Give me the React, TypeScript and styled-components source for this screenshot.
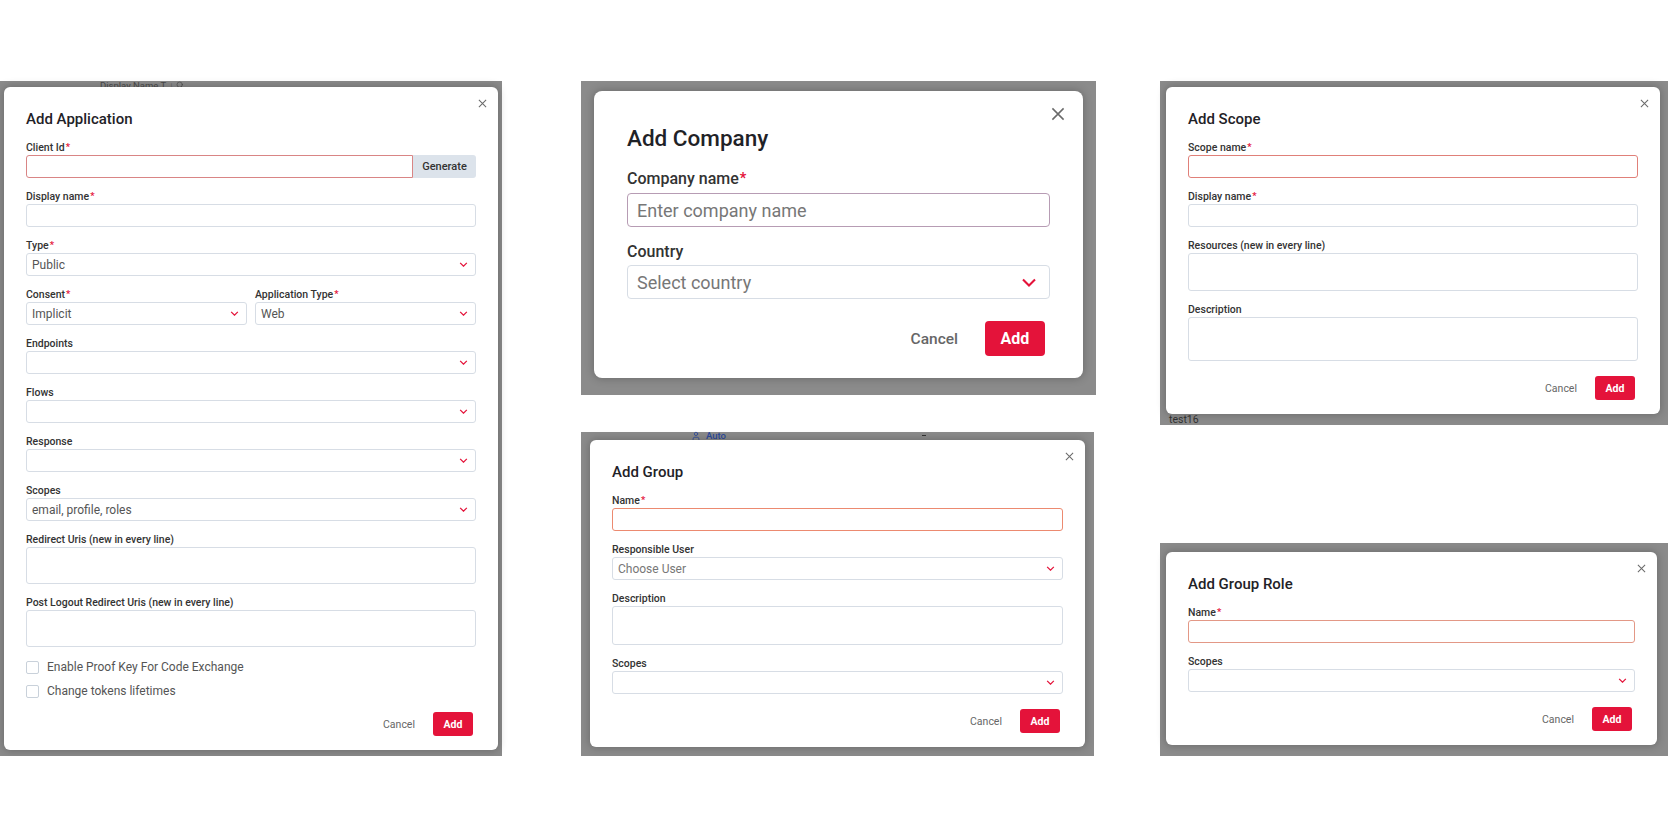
import { createContext, useContext, ReactNode } from "react";
import styled, { createGlobalStyle } from "styled-components";
import { User, Search } from "lucide-react";

const RED = "#e4133a";
const LINE = "#d7dde5";

const GlobalStyle = createGlobalStyle`
  html, body {
    margin: 0;
    padding: 0;
    background: #fff;
    overflow: hidden;
  }
  body {
    font-family: Roboto, "Liberation Sans", Arial, sans-serif;
  }
  * {
    box-sizing: border-box;
  }
`;

// true for the bigger "Add Company" capture
const SizeContext = createContext(false);

const XIcon = ({ size }: { size: number }) => (
  <svg width={size} height={size} viewBox="0 0 10 10">
    <path d="M1 1L9 9M9 1L1 9" stroke="#6a6a6a" strokeWidth={size > 10 ? 1.1 : 1.15} fill="none" />
  </svg>
);

const Chevron = ({ lg }: { lg: boolean }) => (
  <svg width={lg ? 16 : 9} height={lg ? 9 : 5} viewBox="0 0 10 6">
    <path d="M1 1L5 5L9 1" stroke={RED} strokeWidth={lg ? 1.4 : 1.5} fill="none" />
  </svg>
);

export default function App() {
  return (
    <>
      <GlobalStyle />
      <Page>
        <Column>
          <Backdrop $w={502} $pad="0 4px 6px">
            <Strip $h={6} $left={96}>
              <PeekText>
                Display Name T<small>↓</small> <Search size={8} strokeWidth={2} />
              </PeekText>
            </Strip>
            <Modal title="Add Application">
              <Field label="Client Id" required>
                <InputGroup>
                  <Input $border="#d98585" />
                  <GenerateButton>Generate</GenerateButton>
                </InputGroup>
              </Field>
              <Field label="Display name" required>
                <Input />
              </Field>
              <Field label="Type" required>
                <Select value="Public" />
              </Field>
              <Pair>
                <Field label="Consent" required>
                  <Select value="Implicit" />
                </Field>
                <Field label="Application Type" required>
                  <Select value="Web" />
                </Field>
              </Pair>
              <Field label="Endpoints">
                <Select />
              </Field>
              <Field label="Flows">
                <Select />
              </Field>
              <Field label="Response">
                <Select />
              </Field>
              <Field label="Scopes">
                <Select value="email, profile, roles" />
              </Field>
              <Field label="Redirect Uris (new in every line)">
                <TextArea $h={37} />
              </Field>
              <Field label="Post Logout Redirect Uris (new in every line)">
                <TextArea $h={37} />
              </Field>
              <CheckList>
                <CheckRow>
                  <Box />
                  Enable Proof Key For Code Exchange
                </CheckRow>
                <CheckRow>
                  <Box />
                  Change tokens lifetimes
                </CheckRow>
              </CheckList>
            </Modal>
          </Backdrop>
        </Column>

        <Column $gap={79}>
          <Backdrop $w={515} $pad="10px 13px 17px">
            <Modal title="Add Company" lg>
              <Field label="Company name" required>
                <Input $border="#b79cb4" placeholder="Enter company name" />
              </Field>
              <Field label="Country">
                <Select placeholder="Select country" />
              </Field>
            </Modal>
          </Backdrop>
          <Backdrop $w={513} $pad="0 9px 9px">
            <Strip $h={8} $left={101}>
              <AutoTag>
                <User size={10} strokeWidth={2} />
                Auto
              </AutoTag>
              <Dash />
            </Strip>
            <Modal title="Add Group">
              <Field label="Name" required>
                <Input $border="#ec8a70" />
              </Field>
              <Field label="Responsible User">
                <Select placeholder="Choose User" />
              </Field>
              <Field label="Description">
                <TextArea $h={39} />
              </Field>
              <Field label="Scopes">
                <Select />
              </Field>
            </Modal>
          </Backdrop>
        </Column>

        <Column $gap={64}>
          <Backdrop $w={508} $pad="6px 8px 0 6px">
            <Modal title="Add Scope">
              <Field label="Scope name" required>
                <Input $border="#e08079" />
              </Field>
              <Field label="Display name" required>
                <Input />
              </Field>
              <Field label="Resources (new in every line)">
                <TextArea $h={38} />
              </Field>
              <Field label="Description">
                <TextArea $h={44} />
              </Field>
            </Modal>
            <Strip $h={11} $left={3}>
              <BehindText>test16</BehindText>
            </Strip>
          </Backdrop>
          <Backdrop $w={508} $pad="9px 11px 11px 6px">
            <Modal title="Add Group Role">
              <Field label="Name" required>
                <Input $border="#e39886" />
              </Field>
              <Field label="Scopes">
                <Select />
              </Field>
            </Modal>
          </Backdrop>
        </Column>
      </Page>
    </>
  );
}

const Modal = ({ title, lg = false, children }: { title: string; lg?: boolean; children: ReactNode }) => (
  <SizeContext.Provider value={lg}>
    <Sheet $lg={lg}>
      <Close $lg={lg} aria-label="Close">
        <XIcon size={lg ? 14 : 9} />
      </Close>
      <Title $lg={lg}>{title}</Title>
      {children}
      <Footer $lg={lg}>
        <CancelButton $lg={lg}>Cancel</CancelButton>
        <AddButton $lg={lg}>Add</AddButton>
      </Footer>
    </Sheet>
  </SizeContext.Provider>
);

const Field = ({ label, required, children }: { label: string; required?: boolean; children: ReactNode }) => {
  const lg = useContext(SizeContext);
  return (
    <FieldWrap $lg={lg}>
      <Label $lg={lg}>
        {label}
        {required && <Req>*</Req>}
      </Label>
      {children}
    </FieldWrap>
  );
};

const Select = ({ value, placeholder }: { value?: string; placeholder?: string }) => {
  const lg = useContext(SizeContext);
  return (
    <SelectBox $lg={lg}>
      <SelectText $lg={lg} $muted={!value}>
        {value ?? placeholder}
      </SelectText>
      <Chevron lg={lg} />
    </SelectBox>
  );
};

const Input = (props: { $border?: string; placeholder?: string }) => {
  const lg = useContext(SizeContext);
  return <InputField $lg={lg} {...props} />;
};

const Page = styled.div`
  display: flex;
  align-items: flex-start;
  padding-top: 81px;
  width: 1668px;
`;

const Column = styled.div<{ $gap?: number }>`
  display: flex;
  flex-direction: column;
  justify-content: space-between;
  height: 675px;
  margin-left: ${(p) => p.$gap ?? 0}px;
`;

const Backdrop = styled.div<{ $w: number; $pad: string }>`
  width: ${(p) => p.$w}px;
  flex-shrink: 0;
  padding: ${(p) => p.$pad};
  background: #8b8b8b;
`;

const Strip = styled.div<{ $h: number; $left: number }>`
  display: flex;
  align-items: flex-start;
  height: ${(p) => p.$h}px;
  padding-left: ${(p) => p.$left}px;
`;

const PeekText = styled.div`
  display: flex;
  align-items: center;
  gap: 3px;
  font-size: 9.5px;
  line-height: 7px;
  color: #4a4a4a;

  small {
    font-size: 8px;
  }
`;

const AutoTag = styled.div`
  display: flex;
  align-items: center;
  gap: 5px;
  margin-top: -1px;
  font-size: 9.5px;
  line-height: 8px;
  font-weight: 500;
  color: #2c4a9c;
`;

const Dash = styled.span`
  width: 4px;
  height: 1px;
  margin: 3px 0 0 196px;
  background: #333;
`;

const BehindText = styled.div`
  font-size: 10.5px;
  line-height: 11px;
  color: #333;
`;

const Sheet = styled.div<{ $lg: boolean }>`
  position: relative;
  background: #fff;
  border-radius: ${(p) => (p.$lg ? 8 : 6)}px;
  box-shadow: 0 0 9px 1px rgba(0, 0, 0, 0.22);
  padding: ${(p) => (p.$lg ? "33px 33px 22px" : "22px 22px 14px")};
`;

const Close = styled.button<{ $lg: boolean }>`
  position: absolute;
  top: ${(p) => (p.$lg ? 16 : 12)}px;
  right: ${(p) => (p.$lg ? 18 : 11)}px;
  display: flex;
  padding: 0;
  border: 0;
  background: none;
`;

const Title = styled.h2<{ $lg: boolean }>`
  margin: 0 0 ${(p) => (p.$lg ? 17 : 12)}px;
  font-size: ${(p) => (p.$lg ? 22.5 : 15)}px;
  line-height: ${(p) => (p.$lg ? 28 : 20)}px;
  font-weight: 500;
  color: #1f2227;
`;

const FieldWrap = styled.div<{ $lg: boolean }>`
  margin-bottom: ${(p) => (p.$lg ? 15 : 12)}px;
`;

const Label = styled.label<{ $lg: boolean }>`
  display: block;
  margin-bottom: ${(p) => (p.$lg ? 3 : 1)}px;
  font-size: ${(p) => (p.$lg ? 16 : 10.5)}px;
  line-height: ${(p) => (p.$lg ? 20 : 13)}px;
  font-weight: 500;
  color: #333;
`;

const Req = styled.span`
  position: relative;
  top: -1px;
  margin-left: 1px;
  color: ${RED};
  font-size: 0.9em;
  font-weight: 700;
`;

const InputField = styled.input<{ $lg: boolean; $border?: string }>`
  display: block;
  width: 100%;
  min-width: 0;
  height: ${(p) => (p.$lg ? 34 : 23)}px;
  padding: 0 ${(p) => (p.$lg ? 9 : 5)}px;
  border: 1px solid ${(p) => p.$border ?? LINE};
  border-radius: ${(p) => (p.$lg ? 4 : 3)}px;
  background: #fff;
  font-family: inherit;
  font-size: ${(p) => (p.$lg ? 18 : 12)}px;
  color: #555;
  outline: none;

  &::placeholder {
    color: #777;
  }
`;

const InputGroup = styled.div`
  display: flex;

  input {
    flex: 1;
    border-radius: 3px 0 0 3px;
  }
`;

const GenerateButton = styled.button`
  width: 63px;
  height: 23px;
  flex-shrink: 0;
  border: 0;
  border-radius: 0 3px 3px 0;
  background: #dce3eb;
  font-family: inherit;
  font-size: 11px;
  font-weight: 500;
  color: #333;
`;

const Pair = styled.div`
  display: grid;
  grid-template-columns: 1fr 1fr;
  column-gap: 8px;
`;

const SelectBox = styled.div<{ $lg: boolean }>`
  display: flex;
  align-items: center;
  justify-content: space-between;
  height: ${(p) => (p.$lg ? 34 : 23)}px;
  padding: 0 ${(p) => (p.$lg ? 12 : 7)}px 0 ${(p) => (p.$lg ? 9 : 5)}px;
  border: 1px solid ${LINE};
  border-radius: ${(p) => (p.$lg ? 4 : 3)}px;
  background: #fff;
`;

const SelectText = styled.span<{ $lg: boolean; $muted: boolean }>`
  font-size: ${(p) => (p.$lg ? 18 : 12)}px;
  color: ${(p) => (p.$muted ? "#777" : "#555")};
`;

const TextArea = styled.textarea<{ $h: number }>`
  display: block;
  width: 100%;
  height: ${(p) => p.$h}px;
  border: 1px solid ${LINE};
  border-radius: 3px;
  resize: none;
  outline: none;
`;

const CheckList = styled.div`
  display: flex;
  flex-direction: column;
  gap: 8px;
  margin-bottom: 10px;
`;

const CheckRow = styled.label`
  display: flex;
  align-items: center;
  gap: 8px;
  height: 16px;
  font-size: 12px;
  color: #555;
`;

const Box = styled.span`
  width: 13px;
  height: 13px;
  border: 1px solid #c9d1da;
  border-radius: 2px;
  background: #fff;
`;

const Footer = styled.div<{ $lg: boolean }>`
  display: flex;
  justify-content: flex-end;
  align-items: center;
  gap: ${(p) => (p.$lg ? 27 : 18)}px;
  padding-top: ${(p) => (p.$lg ? 7 : 3)}px;
  padding-right: ${(p) => (p.$lg ? 5 : 3)}px;
`;

const CancelButton = styled.button<{ $lg: boolean }>`
  padding: 0;
  border: 0;
  background: none;
  font-family: inherit;
  font-size: ${(p) => (p.$lg ? 15.5 : 10.5)}px;
  font-weight: ${(p) => (p.$lg ? 500 : 400)};
  color: #666;
`;

const AddButton = styled.button<{ $lg: boolean }>`
  width: ${(p) => (p.$lg ? 60 : 40)}px;
  height: ${(p) => (p.$lg ? 35 : 24)}px;
  border: 0;
  border-radius: ${(p) => (p.$lg ? 4 : 3)}px;
  background: ${RED};
  font-family: inherit;
  font-size: ${(p) => (p.$lg ? 16 : 10.5)}px;
  font-weight: 700;
  color: #fff;
`;
